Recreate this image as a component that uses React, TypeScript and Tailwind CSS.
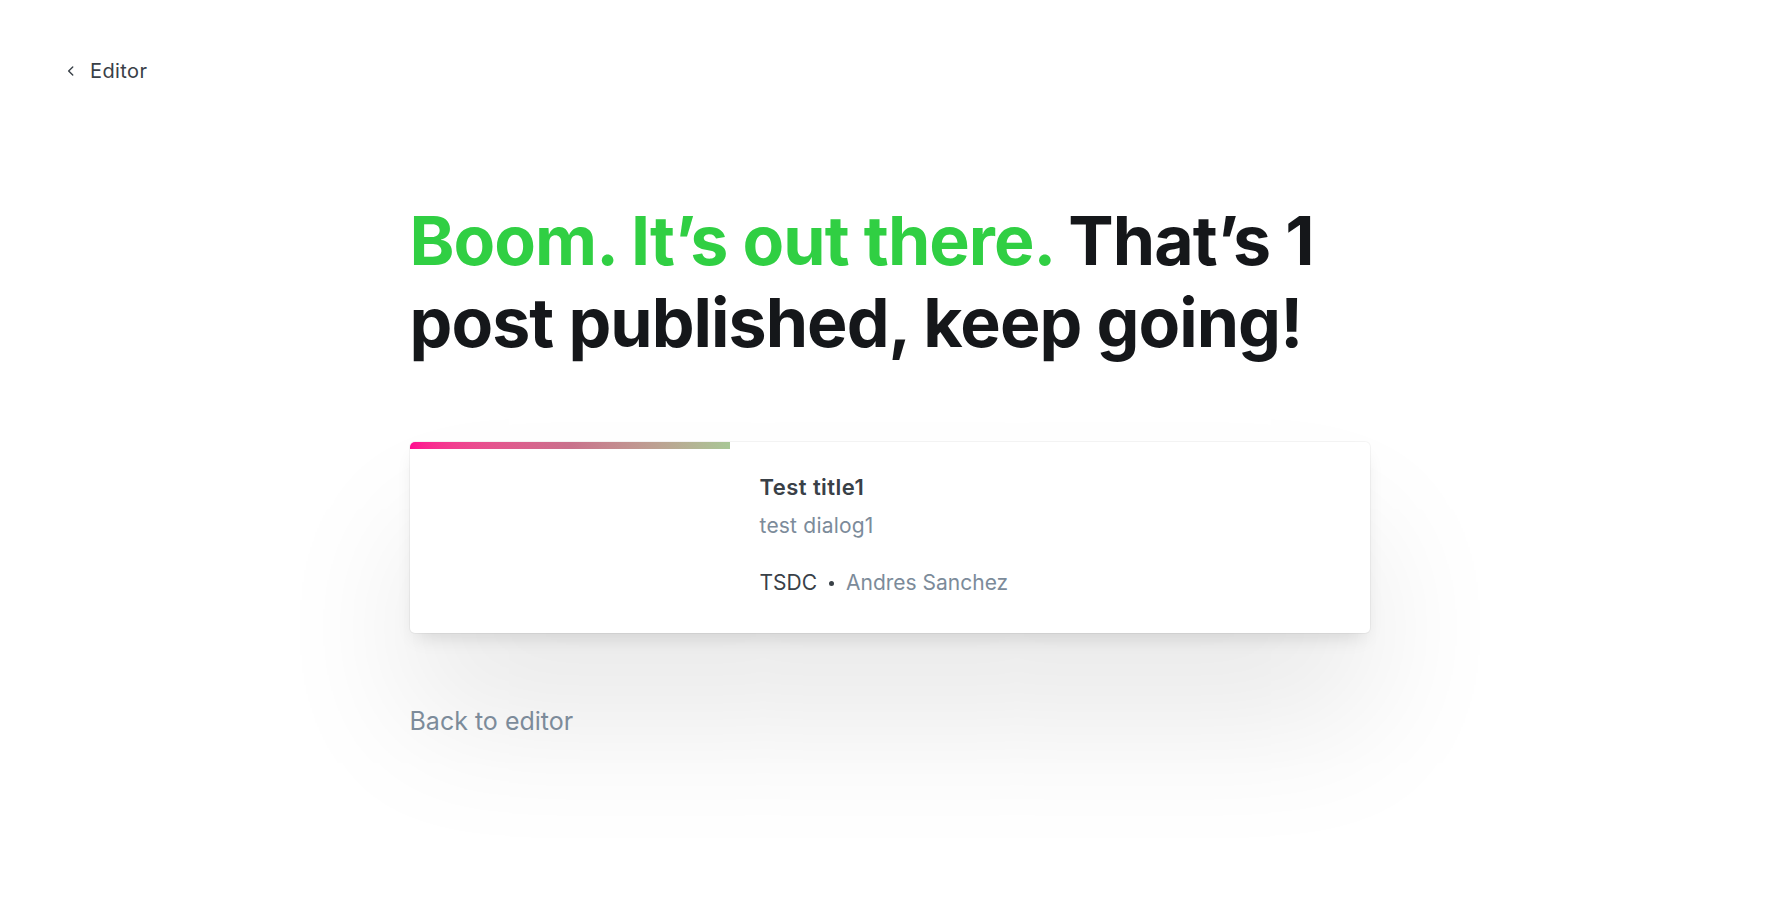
import React from 'react';

export default function App() {
  return (
    <div className="min-h-screen bg-white text-[#15171a] font-['Inter','Noto_Sans',sans-serif]">
      {/* Top bar */}
      <div className="px-[64px] pt-[57px]">
        <a href="#" className="inline-flex items-center gap-[12px] text-[20px] leading-[28px] tracking-[0.02em] text-[#394047]">
          <svg width="14" height="14" viewBox="0 0 24 24" fill="none" stroke="currentColor" strokeWidth="2.4" strokeLinecap="round" strokeLinejoin="round">
            <path d="M15 19l-7-7 7-7" />
          </svg>
          Editor
        </a>
      </div>

      <div className="mx-auto w-[960px] pt-[114px]">
        <h1 className="text-[68px] leading-[82px] font-bold tracking-[-0.014em]">
          <span className="text-[#30cf43]">Boom. It’s out there.</span> That’s 1 post published, keep going!
        </h1>

        {/* Post card */}
        <div className="mt-[79px] flex h-[191px] rounded-[5px] bg-white shadow-[0_0_0_1px_rgba(0,0,0,0.04),0_10px_18px_-6px_rgba(0,0,0,0.12),0_90px_140px_0_rgba(0,0,0,0.09)]">
          <div className="w-[320px] shrink-0">
            <div className="h-[7px] rounded-tl-[5px] bg-gradient-to-r from-[#ff0890] via-[#c9718c] to-[#a8c796]" />
          </div>
          <div className="pl-[30px] pt-[30px]">
            <div className="text-[22px] leading-[30px] font-semibold tracking-[0.02em] text-[#394047]">Test title1</div>
            <div className="mt-[10px] text-[21px] leading-[28px] tracking-[0.01em] text-[#7c8b9a]">test dialog1</div>
            <div className="mt-[29px] flex items-center text-[21px] leading-[28px]">
              <span className="text-[#394047]">TSDC</span>
              <span className="mx-[12px] h-[5px] w-[5px] rounded-full bg-[#394047]" />
              <span className="text-[#7c8b9a]">Andres Sanchez</span>
            </div>
          </div>
        </div>

        <div className="mt-[70px]">
          <a href="#" className="text-[25px] leading-[36px] text-[#7c8b9a]">Back to editor</a>
        </div>
      </div>
    </div>
  );
}
